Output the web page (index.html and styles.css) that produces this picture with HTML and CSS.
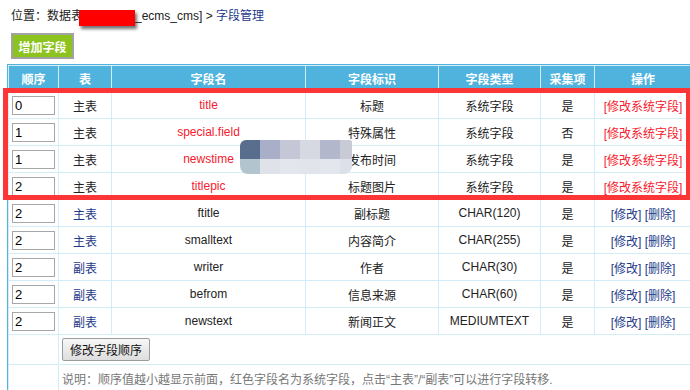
FILE: index.html
```html
<!doctype html>
<html>
    <head>
        <meta charset="utf-8">
        <link rel="stylesheet" href="styles.css">
    </head>
    <body>
        <div class="crumb">
            位置：数据表<span class="redact"></span>_ecms_cms] &gt; <a href="#">字段管理</a>
        </div>

        <div class="toolbar">
            <input type="button" class="btn-add" value="增加字段" />
        </div>

        <form class="list">
            <table class="grid">
                <colgroup>
                    <col class="c-order" />
                    <col class="c-tb" />
                    <col class="c-name" />
                    <col class="c-label" />
                    <col class="c-type" />
                    <col class="c-collect" />
                    <col class="c-ops" />
                </colgroup>
                <tr class="head">
                    <th>顺序</th>
                    <th>表</th>
                    <th>字段名</th>
                    <th>字段标识</th>
                    <th>字段类型</th>
                    <th>采集项</th>
                    <th>操作</th>
                </tr>

                <!-- system fields -->
                <tr>
                    <td class="order"><input type="text" value="0" /></td>
                    <td>主表</td>
                    <td class="sys">title</td>
                    <td>标题</td>
                    <td>系统字段</td>
                    <td>是</td>
                    <td><a class="sys" href="#">[修改系统字段]</a></td>
                </tr>
                <tr>
                    <td class="order"><input type="text" value="1" /></td>
                    <td>主表</td>
                    <td class="sys">special.field</td>
                    <td>特殊属性</td>
                    <td>系统字段</td>
                    <td>否</td>
                    <td><a class="sys" href="#">[修改系统字段]</a></td>
                </tr>
                <tr>
                    <td class="order"><input type="text" value="1" /></td>
                    <td>主表</td>
                    <td class="sys">newstime</td>
                    <td>发布时间</td>
                    <td>系统字段</td>
                    <td>是</td>
                    <td><a class="sys" href="#">[修改系统字段]</a></td>
                </tr>
                <tr>
                    <td class="order"><input type="text" value="2" /></td>
                    <td>主表</td>
                    <td class="sys">titlepic</td>
                    <td>标题图片</td>
                    <td>系统字段</td>
                    <td>是</td>
                    <td><a class="sys" href="#">[修改系统字段]</a></td>
                </tr>

                <!-- custom fields -->
                <tr>
                    <td class="order"><input type="text" value="2" /></td>
                    <td><a href="#">主表</a></td>
                    <td>ftitle</td>
                    <td>副标题</td>
                    <td>CHAR(120)</td>
                    <td>是</td>
                    <td><a href="#">[修改]</a> <a href="#">[删除]</a></td>
                </tr>
                <tr>
                    <td class="order"><input type="text" value="2" /></td>
                    <td><a href="#">主表</a></td>
                    <td>smalltext</td>
                    <td>内容简介</td>
                    <td>CHAR(255)</td>
                    <td>是</td>
                    <td><a href="#">[修改]</a> <a href="#">[删除]</a></td>
                </tr>
                <tr>
                    <td class="order"><input type="text" value="2" /></td>
                    <td><a href="#">副表</a></td>
                    <td>writer</td>
                    <td>作者</td>
                    <td>CHAR(30)</td>
                    <td>是</td>
                    <td><a href="#">[修改]</a> <a href="#">[删除]</a></td>
                </tr>
                <tr>
                    <td class="order"><input type="text" value="2" /></td>
                    <td><a href="#">副表</a></td>
                    <td>befrom</td>
                    <td>信息来源</td>
                    <td>CHAR(60)</td>
                    <td>是</td>
                    <td><a href="#">[修改]</a> <a href="#">[删除]</a></td>
                </tr>
                <tr>
                    <td class="order"><input type="text" value="2" /></td>
                    <td><a href="#">副表</a></td>
                    <td>newstext</td>
                    <td>新闻正文</td>
                    <td>MEDIUMTEXT</td>
                    <td>是</td>
                    <td><a href="#">[修改]</a> <a href="#">[删除]</a></td>
                </tr>

                <tr class="submit-row">
                    <td></td>
                    <td colspan="6"><input type="button" class="btn" value="修改字段顺序" /></td>
                </tr>
                <tr class="note-row">
                    <td></td>
                    <td colspan="6">说明：顺序值越小越显示前面，红色字段名为系统字段，点击“主表”/“副表”可以进行字段转移.</td>
                </tr>
            </table>
        </form>

        <!-- screenshot annotations -->
        <div class="mark"></div>
        <div class="mosaic">
            <span style="background:#586e8c"></span>
            <span style="background:#a9aec9"></span>
            <span style="background:#c5c7d6"></span>
            <span style="background:#d6d8e2"></span>
            <span style="background:#b2b7cc"></span>
            <span style="background:#c8cad6"></span>
            <span style="background:#b2c5cf"></span>
            <span style="background:#e0e2ea"></span>
            <span style="background:#e4e6ee"></span>
            <span style="background:#e2e4ec"></span>
            <span style="background:#e4e6ed"></span>
            <span style="background:#dde0e8"></span>
        </div>
    </body>
</html>
```

FILE: styles.css
```css
html {
    margin: 0;
    overflow: hidden;
}
body {
    margin: 0;
    padding: 0;
    font-family: "Liberation Sans", "Noto Sans CJK SC", sans-serif;
    font-size: 12px;
    color: #222;
    background: #fff;
    overflow: hidden;
}
a {
    color: #1d3a8a;
    text-decoration: none;
}

.crumb {
    padding: 8px 0 0 11px;
    height: 17px;
    line-height: 17px;
    white-space: nowrap;
}
.redact {
    display: inline-block;
    vertical-align: top;
    width: 56px;
    height: 16px;
    margin: 2px 0 0 -4px;
    background: #fe0000;
    box-shadow: 2px 3px 3px rgba(0, 0, 0, 0.55);
}

.toolbar {
    padding: 8px 0 5px 11px;
}
.btn-add {
    display: block;
    width: 63px;
    height: 26px;
    margin: 0;
    padding: 0;
    border: 2px solid #a2a2a2;
    background: #8dc31f;
    color: #fff;
    font-family: "Noto Sans CJK SC", sans-serif;
    font-size: 12px;
    font-weight: bold;
}

.list {
    margin: 0;
    padding: 0 0 0 7px;
}
.grid {
    table-layout: fixed;
    width: 686px;
    border: 1px solid #4fb3dd;
    border-spacing: 1px;
    background: #d2ecf8;
}
.c-order { width: 49px; }
.c-tb { width: 52px; }
.c-name { width: 193px; }
.c-label { width: 132px; }
.c-type { width: 101px; }
.c-collect { width: 53px; }
.c-ops { width: 96px; }

.grid th,
.grid td {
    padding: 0;
    text-align: center;
    white-space: nowrap;
    background: #fff;
}
.grid th {
    height: 25px;
    background: #4fb3dd;
    color: #fff;
    font-family: "Noto Sans CJK SC", sans-serif;
    font-weight: bold;
}
.grid td {
    height: 26px;
}
.grid td.order {
    text-align: left;
    padding-left: 3px;
}
.order input {
    box-sizing: border-box;
    width: 43px;
    height: 19px;
    margin: 0;
    padding: 0 2px;
    border: 1px solid #a7a7a7;
    font-family: "Liberation Sans", sans-serif;
    font-size: 13px;
    color: #000;
    vertical-align: middle;
}
.sys {
    color: #f5202e;
}
a.sys {
    color: #f5202e;
}

.submit-row td {
    height: 29px;
    text-align: left;
}
.submit-row td[colspan] {
    padding-left: 3px;
}
.btn {
    height: 23px;
    padding: 0 7px;
    border: 1px solid #9c9c9c;
    border-radius: 2px;
    background: linear-gradient(#f6f6f6, #dedede);
    color: #111;
    font-family: "Noto Sans CJK SC", sans-serif;
    font-size: 12px;
}
.note-row td {
    height: 26px;
    text-align: left;
    color: #777;
}
.note-row td[colspan] {
    padding-left: 3px;
}

/* red box drawn over the system-field rows */
.mark {
    position: absolute;
    left: 3px;
    top: 88px;
    width: 678px;
    height: 102px;
    border: 5px solid #fc3636;
}

/* blurred patch over the newstime row */
.mosaic {
    position: absolute;
    left: 240px;
    top: 140px;
    width: 112px;
    height: 34px;
    display: grid;
    grid-template-columns: 20px 20px 20px 20px 20px 12px;
    grid-template-rows: 19px 15px;
    border-radius: 6px 2px 8px 8px;
    overflow: hidden;
}
```
